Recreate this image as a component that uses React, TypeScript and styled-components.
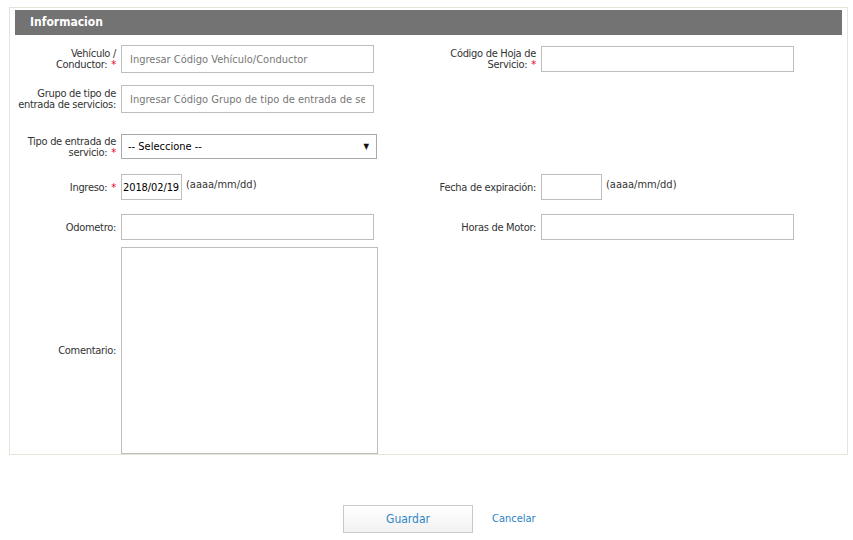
import styled, { createGlobalStyle } from 'styled-components';

const GlobalStyle = createGlobalStyle`
  html, body {
    margin: 0;
    padding: 0;
    background: #fff;
  }
  body {
    font-family: "DejaVu Sans Condensed", "Liberation Sans", sans-serif;
    font-size: 11px;
    color: #333;
  }
`;

const Page = styled.div`
  padding: 7px 0 0 9px;
  width: 853px;
  height: 540px;
  box-sizing: border-box;
`;

const Panel = styled.section`
  width: 839px;
  height: 448px;
  box-sizing: border-box;
  border: 1px solid #e4e4da;
  padding: 2px 5px 0 5px;
`;

const PanelHeader = styled.div`
  height: 25px;
  background: #737373;
  color: #fff;
  font-weight: bold;
  font-size: 12px;
  line-height: 25px;
  padding-left: 15px;
`;

const Row = styled.div<{ $mt: number }>`
  display: flex;
  margin-top: ${(p) => p.$mt}px;
`;

const Cell = styled.div`
  width: 420px;
  flex-shrink: 0;
  display: flex;
  align-items: center;
  gap: 5px;
`;

const Label = styled.label`
  width: 101px;
  flex-shrink: 0;
  text-align: right;
  line-height: 11px;
  white-space: nowrap;
  letter-spacing: -0.3px;
  color: #333;
`;

const Req = styled.span`
  color: #e8002a;
  margin-left: 4px;
`;

const TextInput = styled.input<{ $w: number; $h: number }>`
  width: ${(p) => p.$w}px;
  height: ${(p) => p.$h}px;
  box-sizing: border-box;
  border: 1px solid #bdbdbd;
  padding: 0 8px;
  font-family: inherit;
  font-size: 11px;
  color: #000;
  background: #fff;
  outline: none;

  &::placeholder {
    color: #777;
  }
`;

const DateInput = styled(TextInput)`
  padding: 0 1px;
  font-size: 11px;
  letter-spacing: -0.1px;
`;

const DateHint = styled.span`
  align-self: flex-start;
  margin-top: 4px;
  margin-left: -1px;
  color: #333;
`;

const SelectBox = styled.div`
  width: 256px;
  height: 25px;
  box-sizing: border-box;
  border: 1px solid #a9a9a9;
  display: flex;
  align-items: center;
  justify-content: space-between;
  padding: 0 7px 0 6px;
  color: #000;
  font-size: 11px;
  background: #fff;
`;

const Arrow = styled.span`
  font-size: 8px;
  color: #111;
`;

const TextArea = styled.textarea`
  width: 257px;
  height: 207px;
  box-sizing: border-box;
  border: 1px solid #bdbdbd;
  resize: none;
  outline: none;
  font-family: inherit;
`;

const Actions = styled.div`
  display: flex;
  align-items: center;
  margin: 50px 0 0 334px;
  gap: 19px;
`;

const SaveButton = styled.button`
  width: 130px;
  height: 28px;
  border: 1px solid #c9c9c9;
  background: linear-gradient(#ffffff, #f2f2f2);
  color: #2f86c6;
  font-family: inherit;
  font-size: 12px;
  cursor: pointer;
`;

const CancelLink = styled.a`
  color: #2b83c6;
  font-size: 11px;
  text-decoration: none;
  cursor: pointer;
  margin-top: -2px;
`;

export default function App() {
  return (
    <Page>
      <GlobalStyle />
      <Panel>
        <PanelHeader>Informacion</PanelHeader>

        <Row $mt={10}>
          <Cell>
            <Label>
              Vehículo /<br />
              Conductor:<Req>*</Req>
            </Label>
            <TextInput $w={253} $h={28} placeholder="Ingresar Código Vehículo/Conductor" />
          </Cell>
          <Cell>
            <Label>
              Código de Hoja de<br />
              Servicio:<Req>*</Req>
            </Label>
            <TextInput $w={253} $h={26} />
          </Cell>
        </Row>

        <Row $mt={12}>
          <Cell>
            <Label>
              Grupo de tipo de<br />
              entrada de servicios:
            </Label>
            <TextInput $w={253} $h={28} placeholder="Ingresar Código Grupo de tipo de entrada de servicios" />
          </Cell>
        </Row>

        <Row $mt={21}>
          <Cell>
            <Label>
              Tipo de entrada de<br />
              servicio:<Req>*</Req>
            </Label>
            <SelectBox>
              <span>-- Seleccione --</span>
              <Arrow>▼</Arrow>
            </SelectBox>
          </Cell>
        </Row>

        <Row $mt={15}>
          <Cell>
            <Label>
              Ingreso:<Req>*</Req>
            </Label>
            <DateInput $w={61} $h={26} defaultValue="2018/02/19" />
            <DateHint>(aaaa/mm/dd)</DateHint>
          </Cell>
          <Cell>
            <Label>Fecha de expiración:</Label>
            <DateInput $w={61} $h={26} />
            <DateHint>(aaaa/mm/dd)</DateHint>
          </Cell>
        </Row>

        <Row $mt={14}>
          <Cell>
            <Label>Odometro:</Label>
            <TextInput $w={253} $h={26} />
          </Cell>
          <Cell>
            <Label>Horas de Motor:</Label>
            <TextInput $w={253} $h={26} />
          </Cell>
        </Row>

        <Row $mt={7}>
          <Cell>
            <Label>Comentario:</Label>
            <TextArea />
          </Cell>
        </Row>
      </Panel>

      <Actions>
        <SaveButton>Guardar</SaveButton>
        <CancelLink>Cancelar</CancelLink>
      </Actions>
    </Page>
  );
}
